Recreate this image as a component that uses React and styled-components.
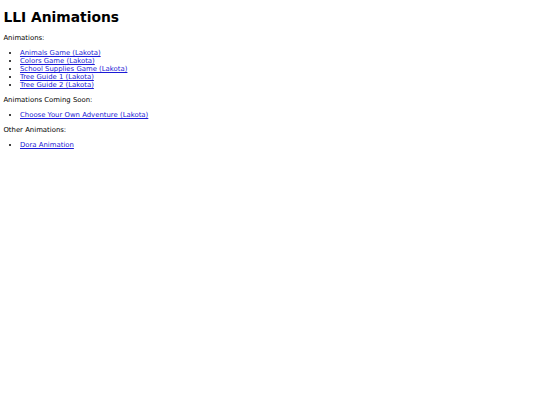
import React from 'react';
import styled, { createGlobalStyle } from 'styled-components';

const GlobalStyle = createGlobalStyle`
  html, body {
    background: #ffffff;
  }
  body {
    margin: 3.4px;
    font-family: "DejaVu Sans", Verdana, sans-serif;
    font-size: 6.9px;
    color: #000000;
  }
`;

const Title = styled.h1`
  font-size: 13.85px;
  font-weight: bold;
  margin: 6px 0 9px;
`;

const SectionLabel = styled.p`
  margin: 1em 0;
`;

const LinkList = styled.ul`
  margin: 1em 0;
  padding-left: 16.6px;
  list-style: disc;
`;

const LinkItem = styled.li`
  line-height: normal;
`;

const Link = styled.a`
  color: #1a1ad6;
  text-decoration: underline;
`;

const sections = [
  {
    label: 'Animations:',
    links: [
      'Animals Game (Lakota)',
      'Colors Game (Lakota)',
      'School Supplies Game (Lakota)',
      'Tree Guide 1 (Lakota)',
      'Tree Guide 2 (Lakota)',
    ],
  },
  {
    label: 'Animations Coming Soon:',
    links: ['Choose Your Own Adventure (Lakota)'],
  },
  {
    label: 'Other Animations:',
    links: ['Dora Animation'],
  },
];

const App = () => {
  return (
    <>
      <GlobalStyle />
      <Title>LLI Animations</Title>
      {sections.map((section) => (
        <React.Fragment key={section.label}>
          <SectionLabel>{section.label}</SectionLabel>
          <LinkList>
            {section.links.map((name) => (
              <LinkItem key={name}>
                <Link href="#">{name}</Link>
              </LinkItem>
            ))}
          </LinkList>
        </React.Fragment>
      ))}
    </>
  );
};

export default App;
